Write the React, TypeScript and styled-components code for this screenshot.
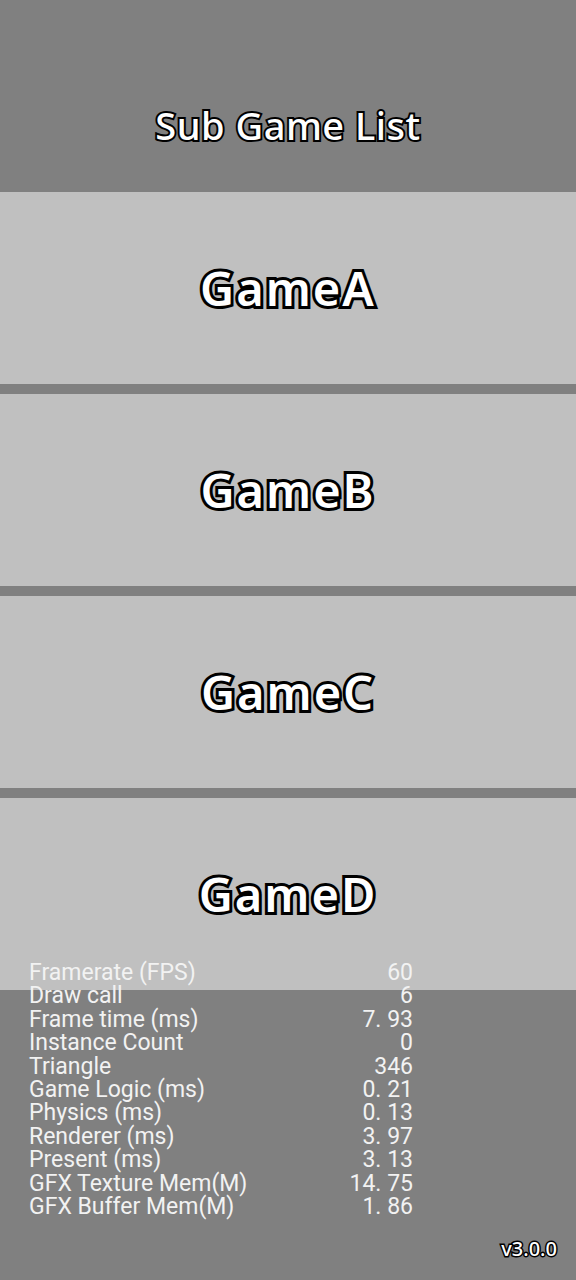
import React from "react";
import styled, { createGlobalStyle } from "styled-components";

const Global = createGlobalStyle`
  html, body { margin: 0; padding: 0; background: #808080; }
  #root { width: 576px; height: 1280px; }
`;

const Screen = styled.div`
  position: relative;
  width: 576px;
  height: 1280px;
  background: #808080;
  overflow: hidden;
  display: flex;
  flex-direction: column;
`;

const Header = styled.div`
  height: 192px;
  display: flex;
  align-items: center;
  justify-content: center;
  padding-top: 58px;
  box-sizing: border-box;
  background: #808080;
`;

const Outlined = styled.span<{ $size: number; $stroke: number; $weight: number; $spacing?: number }>`
  font-family: "Noto Sans", "Open Sans", sans-serif;
  font-size: ${(p) => p.$size}px;
  font-weight: ${(p) => p.$weight};
  letter-spacing: ${(p) => p.$spacing ?? 0}px;
  color: #ffffff;
  -webkit-text-stroke: ${(p) => p.$stroke}px #000;
  paint-order: stroke fill;
  line-height: 1;
`;

const List = styled.div`
  display: flex;
  flex-direction: column;
  gap: 10px;
`;

const GameButton = styled.div`
  height: 192px;
  background: #c0c0c0;
  display: flex;
  align-items: center;
  justify-content: center;
`;

const Stats = styled.div`
  position: absolute;
  left: 29px;
  top: 961px;
  width: 384px;
  font-family: Roboto, "Noto Sans", sans-serif;
  font-size: 23px;
  line-height: 23.4px;
  color: #f2f2f2;
`;

const StatRow = styled.div`
  display: flex;
  justify-content: space-between;
  white-space: pre;
`;

const Version = styled.div`
  position: absolute;
  right: 19px;
  bottom: 20px;
`;

const stats: [string, string][] = [
  ["Framerate (FPS)", "60"],
  ["Draw call", "6"],
  ["Frame time (ms)", "7. 93"],
  ["Instance Count", "0"],
  ["Triangle", "346"],
  ["Game Logic (ms)", "0. 21"],
  ["Physics (ms)", "0. 13"],
  ["Renderer (ms)", "3. 97"],
  ["Present (ms)", "3. 13"],
  ["GFX Texture Mem(M)", "14. 75"],
  ["GFX Buffer Mem(M)", "1. 86"],
];

export default function App() {
  return (
    <>
      <Global />
      <Screen>
        <Header>
          <Outlined $size={38} $stroke={4} $weight={500} $spacing={0.5}>Sub Game List</Outlined>
        </Header>
        <List>
          {["GameA", "GameB", "GameC", "GameD"].map((g) => (
            <GameButton key={g}>
              <Outlined $size={47} $stroke={6} $weight={600} $spacing={2}>{g}</Outlined>
            </GameButton>
          ))}
        </List>
        <Stats>
          {stats.map(([k, v]) => (
            <StatRow key={k}>
              <span>{k}</span>
              <span>{v}</span>
            </StatRow>
          ))}
        </Stats>
        <Version>
          <Outlined $size={20} $stroke={3} $weight={500}>v3.0.0</Outlined>
        </Version>
      </Screen>
    </>
  );
}
